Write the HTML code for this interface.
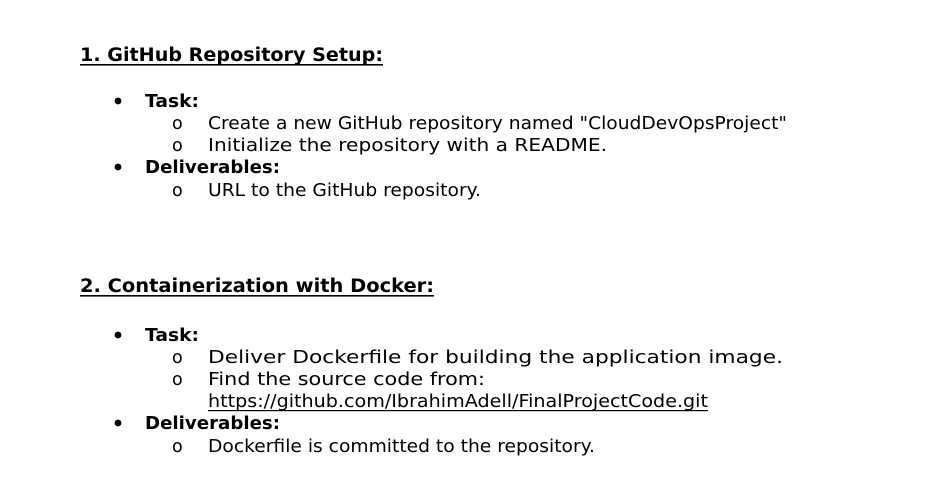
<!DOCTYPE html>
<html><head><meta charset="utf-8"><style>
html,body{margin:0;padding:0;background:#fff;width:935px;height:493px;overflow:hidden}
svg{display:block}
text{font-family:"DejaVu Sans","Liberation Sans",sans-serif;fill:#000}
.h{font-weight:bold;font-size:18.5px}
.b{font-weight:bold;font-size:17.5px}
.n{font-size:17.5px}
</style></head><body>
<svg width="935" height="493" viewBox="0 0 935 493">
<text class="h" x="80" y="61" textLength="303" lengthAdjust="spacingAndGlyphs">1. GitHub Repository Setup:</text>
<rect x="80" y="64" width="303" height="1.6" fill="#000"/>
<circle cx="118" cy="101" r="3.4" fill="#000"/>
<text class="b" x="145" y="107" textLength="54" lengthAdjust="spacingAndGlyphs">Task:</text>
<text class="n" x="172" y="129">o</text>
<text class="n" x="208" y="129" textLength="579" lengthAdjust="spacingAndGlyphs">Create a new GitHub repository named "CloudDevOpsProject"</text>
<text class="n" x="172" y="151">o</text>
<text class="n" x="208" y="151" textLength="399" lengthAdjust="spacingAndGlyphs">Initialize the repository with a README.</text>
<circle cx="118" cy="167" r="3.4" fill="#000"/>
<text class="b" x="145" y="173" textLength="135" lengthAdjust="spacingAndGlyphs">Deliverables:</text>
<text class="n" x="172" y="196">o</text>
<text class="n" x="208" y="196" textLength="273" lengthAdjust="spacingAndGlyphs">URL to the GitHub repository.</text>

<text class="h" x="80" y="292" textLength="354" lengthAdjust="spacingAndGlyphs">2. Containerization with Docker:</text>
<rect x="80" y="295" width="354" height="1.6" fill="#000"/>
<circle cx="118" cy="335" r="3.4" fill="#000"/>
<text class="b" x="145" y="341" textLength="54" lengthAdjust="spacingAndGlyphs">Task:</text>
<text class="n" x="172" y="363">o</text>
<text class="n" x="208" y="363" textLength="575" lengthAdjust="spacingAndGlyphs">Deliver Dockerfile for building the application image.</text>
<text class="n" x="172" y="385">o</text>
<text class="n" x="208" y="385" textLength="277" lengthAdjust="spacingAndGlyphs">Find the source code from:</text>
<text class="n" x="208" y="407" textLength="500" lengthAdjust="spacingAndGlyphs">https://github.com/IbrahimAdell/FinalProjectCode.git</text>
<rect x="208" y="410" width="500" height="1.2" fill="#000"/>
<circle cx="118" cy="423" r="3.4" fill="#000"/>
<text class="b" x="145" y="429" textLength="135" lengthAdjust="spacingAndGlyphs">Deliverables:</text>
<text class="n" x="172" y="452">o</text>
<text class="n" x="208" y="452" textLength="387" lengthAdjust="spacingAndGlyphs">Dockerfile is committed to the repository.</text>
</svg>
</body></html>
